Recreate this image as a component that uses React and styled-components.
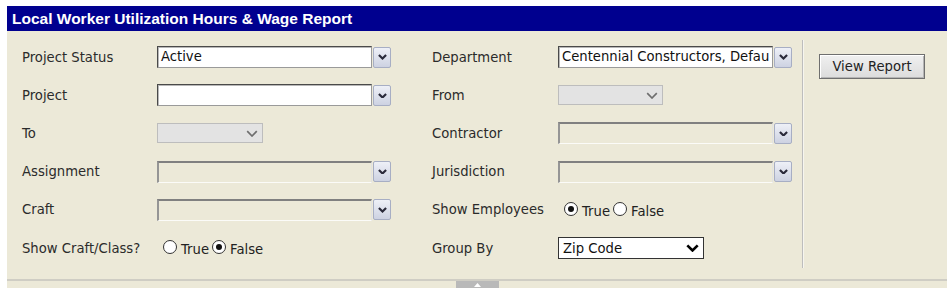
import React from "react";
import styled, { createGlobalStyle } from "styled-components";

const Global = createGlobalStyle`
  html, body { margin: 0; padding: 0; background: #ffffff; }
  body { padding: 6px 4px 0 7px; font-family: "DejaVu Sans", Verdana, sans-serif; }
`;

const Wrapper = styled.div`
  width: 940px;
`;

const Header = styled.div`
  background: #00008f;
  color: #ffffff;
  font-family: "Liberation Sans", Arial, sans-serif;
  font-weight: bold;
  font-size: 15.5px;
  height: 25px;
  line-height: 25px;
  padding-left: 5px;
`;

const Panel = styled.div`
  background: #ece9d8;
  border-bottom: 2px solid #cfcdc4;
  display: flex;
  padding: 7px 0 12px 15px;
`;

const Form = styled.div`
  display: grid;
  grid-template-columns: 135px 275px 126px 232px;
  grid-auto-rows: 38.2px;
  align-items: center;
`;

const Label = styled.div`
  font-size: 13.2px;
  color: #2b2b2b;
  white-space: nowrap;
`;

const Cell = styled.div`
  display: flex;
  align-items: center;
`;

const Combo = styled.div`
  display: flex;
  align-items: center;
  gap: 1px;
`;

const TextBox = styled.div`
  box-sizing: border-box;
  width: 215px;
  height: 22px;
  font-size: 13.2px;
  color: #111;
  line-height: 20px;
  padding-left: 3px;
  overflow: hidden;
  white-space: nowrap;
  background: ${(p) => (p.$disabled ? "#ece9d8" : "#ffffff")};
  border-style: solid;
  border-width: ${(p) => (p.$disabled ? "2px 1px 1px 2px" : "1px")};
  border-color: ${(p) =>
    p.$disabled ? "#808080 #e2e2e2 #fbfbf8 #959595" : "#4a4a4a #9a9a9a #9a9a9a #4a4a4a"};
  box-shadow: ${(p) => (p.$disabled ? "none" : "inset 1px 1px 0 #b8b8b8")};
`;

const DropButton = styled.div`
  box-sizing: border-box;
  width: 18px;
  height: 21px;
  border: 1px solid #a7aec4;
  border-radius: 2px;
  background: linear-gradient(#eef0f7, #cdd2e2);
  display: flex;
  align-items: center;
  justify-content: center;
`;

const NativeSelect = styled.div`
  box-sizing: border-box;
  width: ${(p) => p.$width}px;
  height: ${(p) => (p.$disabled ? 20 : 22)}px;
  display: flex;
  align-items: center;
  justify-content: space-between;
  padding: 0 4px 0 4px;
  font-size: 13.2px;
  color: #111;
  background: ${(p) => (p.$disabled ? "#e3e3e3" : "#ffffff")};
  border: 1px solid ${(p) => (p.$disabled ? "#bdbdbd" : "#333333")};
`;

const RadioGroup = styled.div`
  display: flex;
  align-items: center;
  padding-left: 6px;
  font-size: 13.2px;
  color: #222;
`;

const RadioDot = styled.span`
  box-sizing: border-box;
  width: 14px;
  height: 14px;
  border-radius: 50%;
  border: 1px solid #333;
  background: #fff;
  display: inline-flex;
  align-items: center;
  justify-content: center;
  margin-right: 4px;
  margin-top: -2px;
  &::after {
    content: "";
    width: 6px;
    height: 6px;
    border-radius: 50%;
    background: ${(p) => (p.$checked ? "#111" : "transparent")};
  }
`;

const RadioText = styled.span`
  margin-top: 3px;
  margin-right: 3px;
`;

const Divider = styled.div`
  width: 1px;
  background: #bdbdbd;
  border-right: 1px solid #f6f5ef;
  margin: 2px 0 -1px 12px;
`;

const Side = styled.div`
  padding: 16px 0 0 15px;
  width: 126px;
`;

const Button = styled.button`
  box-sizing: border-box;
  width: 106px;
  height: 25px;
  font-family: "DejaVu Sans", Verdana, sans-serif;
  font-size: 13.2px;
  color: #222;
  background: linear-gradient(#f0f0f0, #dcdcdc);
  border: 1px solid #6f6f6f;
  box-shadow: inset 1px 1px 0 #ffffff, inset -1px -1px 0 #b5b5b5;
  padding: 0;
`;

const Footer = styled.div`
  background: #ece9d8;
  height: 7px;
  display: flex;
  justify-content: center;
`;

const Handle = styled.div`
  width: 43px;
  height: 7px;
  background: #b9b9b9;
  display: flex;
  align-items: center;
  justify-content: center;
`;

const Chevron = ({ color = "#333", w = 9, sw = 2 }) => (
  <svg width={w} height={w * 0.6} viewBox="0 0 10 6">
    <path d="M1 1 L5 5 L9 1" fill="none" stroke={color} strokeWidth={sw} />
  </svg>
);

const ComboBox = ({ value, disabled }) => (
  <Combo>
    <TextBox $disabled={disabled}>{value}</TextBox>
    <DropButton>
      <Chevron color="#2a2a3a" w={9} sw={2.4} />
    </DropButton>
  </Combo>
);

const Select = ({ value, width, disabled }) => (
  <NativeSelect $width={width} $disabled={disabled}>
    <span>{value}</span>
    {disabled ? (
      <Chevron color="#6e6e6e" w={12} sw={1.4} />
    ) : (
      <Chevron color="#000" w={13} sw={2} />
    )}
  </NativeSelect>
);

const Radios = ({ checked }) => (
  <RadioGroup>
    <RadioDot $checked={checked === "True"} />
    <RadioText>True</RadioText>
    <RadioDot $checked={checked === "False"} />
    <RadioText>False</RadioText>
  </RadioGroup>
);

const Triangle = () => (
  <svg width="7" height="4" viewBox="0 0 7 4">
    <path d="M0 4 L3.5 0 L7 4 Z" fill="#ffffff" />
  </svg>
);

export default function App() {
  return (
    <Wrapper>
      <Global />
      <Header>Local Worker Utilization Hours &amp; Wage Report</Header>
      <Panel>
        <Form>
          <Label>Project Status</Label>
          <Cell><ComboBox value="Active" /></Cell>
          <Label>Department</Label>
          <Cell><ComboBox value="Centennial Constructors, Defau" /></Cell>

          <Label>Project</Label>
          <Cell><ComboBox value="" /></Cell>
          <Label>From</Label>
          <Cell><Select width={105} disabled value="" /></Cell>

          <Label>To</Label>
          <Cell><Select width={106} disabled value="" /></Cell>
          <Label>Contractor</Label>
          <Cell><ComboBox disabled value="" /></Cell>

          <Label>Assignment</Label>
          <Cell><ComboBox disabled value="" /></Cell>
          <Label>Jurisdiction</Label>
          <Cell><ComboBox disabled value="" /></Cell>

          <Label>Craft</Label>
          <Cell><ComboBox disabled value="" /></Cell>
          <Label>Show Employees</Label>
          <Cell><Radios checked="True" /></Cell>

          <Label>Show Craft/Class?</Label>
          <Cell><Radios checked="False" /></Cell>
          <Label>Group By</Label>
          <Cell><Select width={146} value="Zip Code" /></Cell>
        </Form>
        <Divider />
        <Side>
          <Button>View Report</Button>
        </Side>
      </Panel>
      <Footer>
        <Handle><Triangle /></Handle>
      </Footer>
    </Wrapper>
  );
}
